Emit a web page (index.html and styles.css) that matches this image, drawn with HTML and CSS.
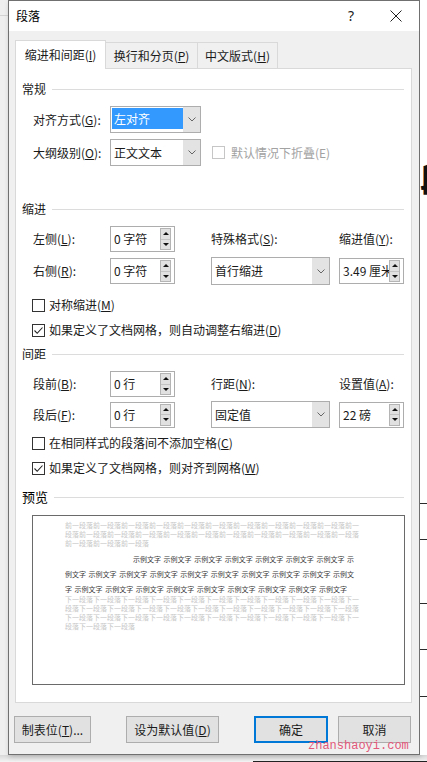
FILE: index.html
```html
<!doctype html>
<html>
<head>
  <meta charset="utf-8">
  <title>段落</title>
  <link rel="stylesheet" href="styles.css">
</head>
<body>
  <div class="screen">
    <div class="desk-left"><span class="desk-line"></span></div>

    <div class="dialog">
      <header class="titlebar">
        <span class="title">段落</span>
        <span class="help">?</span>
        <span class="close">
          <svg width="12" height="12" viewBox="0 0 12 12"><path d="M0.5 0.5 L11.5 11.5 M11.5 0.5 L0.5 11.5" stroke="#222" stroke-width="1" fill="none"/></svg>
        </span>
      </header>

      <nav class="tabs">
        <div class="tab tab-indent active">缩进和间距(<u>I</u>)</div>
        <div class="tab tab-break">换行和分页(<u>P</u>)</div>
        <div class="tab tab-asian">中文版式(<u>H</u>)</div>
      </nav>

      <section class="panel">
        <!-- 常规 -->
        <h3 class="group">常规</h3>
        <div class="grid general">
          <label>对齐方式(<u>G</u>):</label>
          <div class="select short">
            <span class="value picked">左对齐</span>
            <span class="arrow"><svg width="8" height="5" viewBox="0 0 8 5"><polyline points="0.5,0.5 4,4 7.5,0.5" stroke="#666" fill="none"/></svg></span>
          </div>
          <label>大纲级别(<u>O</u>):</label>
          <div class="select short">
            <span class="value">正文文本</span>
            <span class="arrow"><svg width="8" height="5" viewBox="0 0 8 5"><polyline points="0.5,0.5 4,4 7.5,0.5" stroke="#666" fill="none"/></svg></span>
          </div>
          <div class="check disabled inline"><span class="box"></span>默认情况下折叠(E)</div>
        </div>

        <!-- 缩进 -->
        <h3 class="group after-general">缩进</h3>
        <div class="grid indent">
          <label>左侧(<u>L</u>):</label>
          <div class="spin"><span class="value">0 字符</span><span class="arrows"><span class="up"></span><span class="down"></span></span></div>
          <label>特殊格式(<u>S</u>):</label>
          <label>缩进值(<u>Y</u>):</label>
          <label>右侧(<u>R</u>):</label>
          <div class="spin"><span class="value">0 字符</span><span class="arrows"><span class="up"></span><span class="down"></span></span></div>
          <div class="select wide">
            <span class="value">首行缩进</span>
            <span class="arrow"><svg width="8" height="5" viewBox="0 0 8 5"><polyline points="0.5,0.5 4,4 7.5,0.5" stroke="#666" fill="none"/></svg></span>
          </div>
          <div class="spin"><span class="value">3.49 厘米</span><span class="arrows"><span class="up"></span><span class="down"></span></span></div>
        </div>
        <div class="check first"><span class="box"></span>对称缩进(<u>M</u>)</div>
        <div class="check"><span class="box"><svg width="11" height="11" viewBox="0 0 11 11"><polyline points="1.5,5.5 4.2,8.3 9.5,2.5" stroke="#222" stroke-width="1.1" fill="none"/></svg></span>如果定义了文档网格，则自动调整右缩进(<u>D</u>)</div>

        <!-- 间距 -->
        <h3 class="group after-indent">间距</h3>
        <div class="grid spacing">
          <label>段前(<u>B</u>):</label>
          <div class="spin"><span class="value">0 行</span><span class="arrows"><span class="up"></span><span class="down"></span></span></div>
          <label>行距(<u>N</u>):</label>
          <label>设置值(<u>A</u>):</label>
          <label>段后(<u>F</u>):</label>
          <div class="spin"><span class="value">0 行</span><span class="arrows"><span class="up"></span><span class="down"></span></span></div>
          <div class="select wide">
            <span class="value">固定值</span>
            <span class="arrow"><svg width="8" height="5" viewBox="0 0 8 5"><polyline points="0.5,0.5 4,4 7.5,0.5" stroke="#666" fill="none"/></svg></span>
          </div>
          <div class="spin"><span class="value">22 磅</span><span class="arrows"><span class="up"></span><span class="down"></span></span></div>
        </div>
        <div class="check close-up"><span class="box"></span>在相同样式的段落间不添加空格(<u>C</u>)</div>
        <div class="check"><span class="box"><svg width="11" height="11" viewBox="0 0 11 11"><polyline points="1.5,5.5 4.2,8.3 9.5,2.5" stroke="#222" stroke-width="1.1" fill="none"/></svg></span>如果定义了文档网格，则对齐到网格(<u>W</u>)</div>

        <!-- 预览 -->
        <h3 class="group preview-title">预览</h3>
        <div class="preview">
          <p class="ghost">前一段落前一段落前一段落前一段落前一段落前一段落前一段落前一段落前一段落前一段落前一段落前一段落前一段落前一段落前一段落前一段落前一段落前一段落前一段落前一段落前一段落前一段落前一段落前一段落</p>
          <p class="sample">示例文字 示例文字 示例文字 示例文字 示例文字 示例文字 示例文字 示例文字 示例文字 示例文字 示例文字 示例文字 示例文字 示例文字 示例文字 示例文字 示例文字 示例文字 示例文字 示例文字 示例文字 示例文字 示例文字 示例文字 示例文字 示例文字</p>
          <p class="ghost after">下一段落下一段落下一段落下一段落下一段落下一段落下一段落下一段落下一段落下一段落下一段落下一段落下一段落下一段落下一段落下一段落下一段落下一段落下一段落下一段落下一段落下一段落下一段落下一段落下一段落下一段落下一段落下一段落下一段落下一段落下一段落下一段落下一段落下一段落</p>
        </div>
      </section>

      <footer class="buttons">
        <button class="btn tabs-btn">制表位(<u>T</u>)...</button>
        <button class="btn default-btn">设为默认值(<u>D</u>)</button>
        <button class="btn ok-btn">确定</button>
        <button class="btn cancel-btn">取消</button>
      </footer>
    </div>

    <div class="desk-right">
      <span class="doc-char">段</span>
      <span class="rule r1"></span>
      <span class="rule r2"></span>
      <span class="rule r3"></span>
      <span class="rule r4"></span>
      <span class="rule r5"></span>
    </div>
  </div>
  <div class="desk-bottom"></div>

  <div class="watermark">zhanshaoyi.com</div>
</body>
</html>
```

FILE: styles.css
```css
* {
  box-sizing: border-box;
  margin: 0;
  padding: 0;
}

body {
  width: 427px;
  height: 762px;
  overflow: hidden;
  position: relative;
  background: #f2f2f2;
  font-family: "Noto Sans CJK SC", "Noto Sans", sans-serif;
  font-size: 12px;
  line-height: 16px;
  color: #1a1a1a;
}

u { text-underline-offset: 1px; }

.screen {
  display: flex;
  height: 755px;
}

/* what is behind the dialog */
.desk-left {
  width: 8px;
  background: #efefef;
  padding-top: 15px;
}

.desk-line {
  display: block;
  height: 1px;
  background: #d4d4d4;
}

.desk-right {
  flex: 1;
  background: #fff;
  overflow: hidden;
  display: flex;
  flex-direction: column;
}

.doc-char {
  margin-top: 158px;
  font-size: 34px;
  line-height: 40px;
  font-weight: bold;
  color: #111;
  white-space: nowrap;
}

.rule { display: block; height: 1px; background: #2a2a2a; flex: none; }
.r1 { margin-top: 305px; }
.r2 { margin-top: 35px; }
.r3 { margin-top: 63px; }
.r4 { margin-top: 45px; }
.r5 { margin-top: 46px; }

.desk-bottom {
  height: 7px;
  display: flex;
  align-items: flex-end;
  background: linear-gradient(#d8d8d8, #f4f4f4);
}

.desk-bottom::after {
  content: "";
  flex: 1;
  height: 1px;
  margin-left: 253px;
  background: #222;
}

/* dialog */
.dialog {
  width: 412px;
  height: 755px;
  flex: none;
  border: 1px solid #707070;
  background: #f0f0f0;
  display: flex;
  flex-direction: column;
  box-shadow: 1px 2px 5px rgba(0, 0, 0, 0.18);
}

.titlebar {
  height: 30px;
  flex: none;
  background: #fff;
  display: flex;
  align-items: center;
}

.title {
  flex: 1;
  padding-left: 7px;
  color: #000;
}

.help {
  width: 44px;
  text-align: center;
  font-family: "Noto Sans", sans-serif;
  font-size: 14px;
  color: #222;
}

.close {
  width: 46px;
  display: flex;
  justify-content: center;
}

.tabs {
  display: flex;
  align-items: flex-end;
  margin: 9px 7px 0 6px;
}

.tab {
  height: 26px;
  border: 1px solid #d9d9d9;
  border-bottom: 0;
  margin-left: -1px;
  background: #f0f0f0;
  display: flex;
  align-items: center;
  justify-content: center;
}

.tab.active {
  height: 29px;
  margin-left: 0;
  margin-bottom: -1px;
  background: #fff;
  position: relative;
  z-index: 1;
}

.tab-indent { width: 91px; }
.tab-break { width: 93px; }
.tab-asian { width: 81px; }

.panel {
  height: 635px;
  margin: 0 7px 0 6px;
  background: #fff;
  border: 1px solid #d9d9d9;
  padding: 12px 7px 0 6px;
}

.group {
  display: flex;
  align-items: center;
  height: 16px;
  font-size: 12px;
  font-weight: normal;
  color: #1a1a1a;
}

.group::after {
  content: "";
  flex: 1;
  height: 1px;
  margin-left: 6px;
  background: #dcdcdc;
}

.after-general { margin-top: 35px; }
.after-indent { margin-top: 7px; }
.preview-title { margin-top: 12px; font-size: 13px; color: #000; }

.grid {
  display: grid;
  grid-template-columns: 77px 101px 128px 65px;
  align-items: center;
  margin: 9px 0 0 11px;
}

.grid label { white-space: nowrap; }
.grid > label:first-of-type,
.general label { grid-column: 1; }

.general { grid-template-rows: 27px 27px; row-gap: 6px; }
.indent { grid-template-rows: 26px 28px; row-gap: 5px; }
.spacing { grid-template-rows: 26px 27px; row-gap: 4px; }

/* combo boxes */
.select {
  display: flex;
  height: 100%;
  border: 1px solid #adadad;
  background: #fff;
}

.select.short { width: 91px; grid-column: 2; }
.select.wide { width: 119px; }

.select .value {
  flex: 1;
  display: flex;
  align-items: center;
  padding-left: 3px;
}

.select .value.picked {
  margin: 1px 0 3px 1px;
  padding-left: 2px;
  background: #3399ff;
  color: #fff;
}

.select .arrow {
  width: 17px;
  background: #e3e3e3;
  display: flex;
  align-items: center;
  justify-content: center;
}

/* spin boxes */
.spin {
  width: 65px;
  height: 26px;
  display: flex;
  align-items: center;
  border: 1px solid #adadad;
  background: #fff;
  padding: 1px 3px 1px 3px;
}

.spin .value {
  flex: 1;
  overflow: hidden;
  white-space: nowrap;
}

.spin .arrows {
  width: 11px;
  height: 22px;
  flex: none;
  display: flex;
  flex-direction: column;
  border: 1px solid #b4b4b4;
  background: #e1e1e1;
}

.arrows span {
  flex: 1;
  display: flex;
  align-items: center;
  justify-content: center;
}

.arrows .up { border-bottom: 1px solid #c4c4c4; }

.arrows .up::before,
.arrows .down::before {
  content: "";
  border-left: 3px solid transparent;
  border-right: 3px solid transparent;
}

.arrows .up::before { border-bottom: 3px solid #111; }
.arrows .down::before { border-top: 3px solid #111; }

/* check boxes */
.check {
  display: flex;
  align-items: center;
  height: 18px;
  margin: 7px 0 0 10px;
  white-space: nowrap;
}

.check.first { margin-top: 11px; }
.check.close-up { margin-top: 6px; }

.check.inline { margin: 0 0 0 1px; }

.check .box {
  width: 13px;
  height: 13px;
  flex: none;
  margin-right: 4px;
  border: 1px solid #333;
  background: #fff;
  display: flex;
  align-items: center;
  justify-content: center;
}

.check.disabled { color: #a2a2a2; }
.check.disabled .box { border-color: #c6c6c6; margin-right: 6px; }

/* preview */
.preview {
  width: 373px;
  height: 170px;
  margin: 10px 0 0 10px;
  border: 1px solid #6a6a6a;
  padding: 5px 45px 0 32px;
  font-size: 7px;
}

.ghost {
  line-height: 9px;
  color: #c6c6c6;
}

.sample {
  margin: 4px 0 -2px;
  line-height: 15px;
  text-indent: 68px;
  word-spacing: 1px;
  color: #3a3a3a;
}

/* buttons */
.buttons {
  display: flex;
  height: 27px;
  margin: 13px 7px 0 5px;
}

.btn {
  height: 27px;
  border: 1px solid #adadad;
  background: #e1e1e1;
  font-family: "Noto Sans CJK SC", "Noto Sans", sans-serif;
  font-size: 12px;
  color: #1a1a1a;
}

.tabs-btn { width: 77px; }
.default-btn { width: 93px; margin-left: 35px; }
.ok-btn { width: 74px; margin-left: 35px; border: 2px solid #0078d7; }
.cancel-btn { width: 73px; margin-left: 10px; }

.watermark {
  position: absolute;
  left: 308px;
  top: 738px;
  font-family: "Liberation Mono", monospace;
  font-size: 12px;
  line-height: 16px;
  color: #e2587a;
}
```
